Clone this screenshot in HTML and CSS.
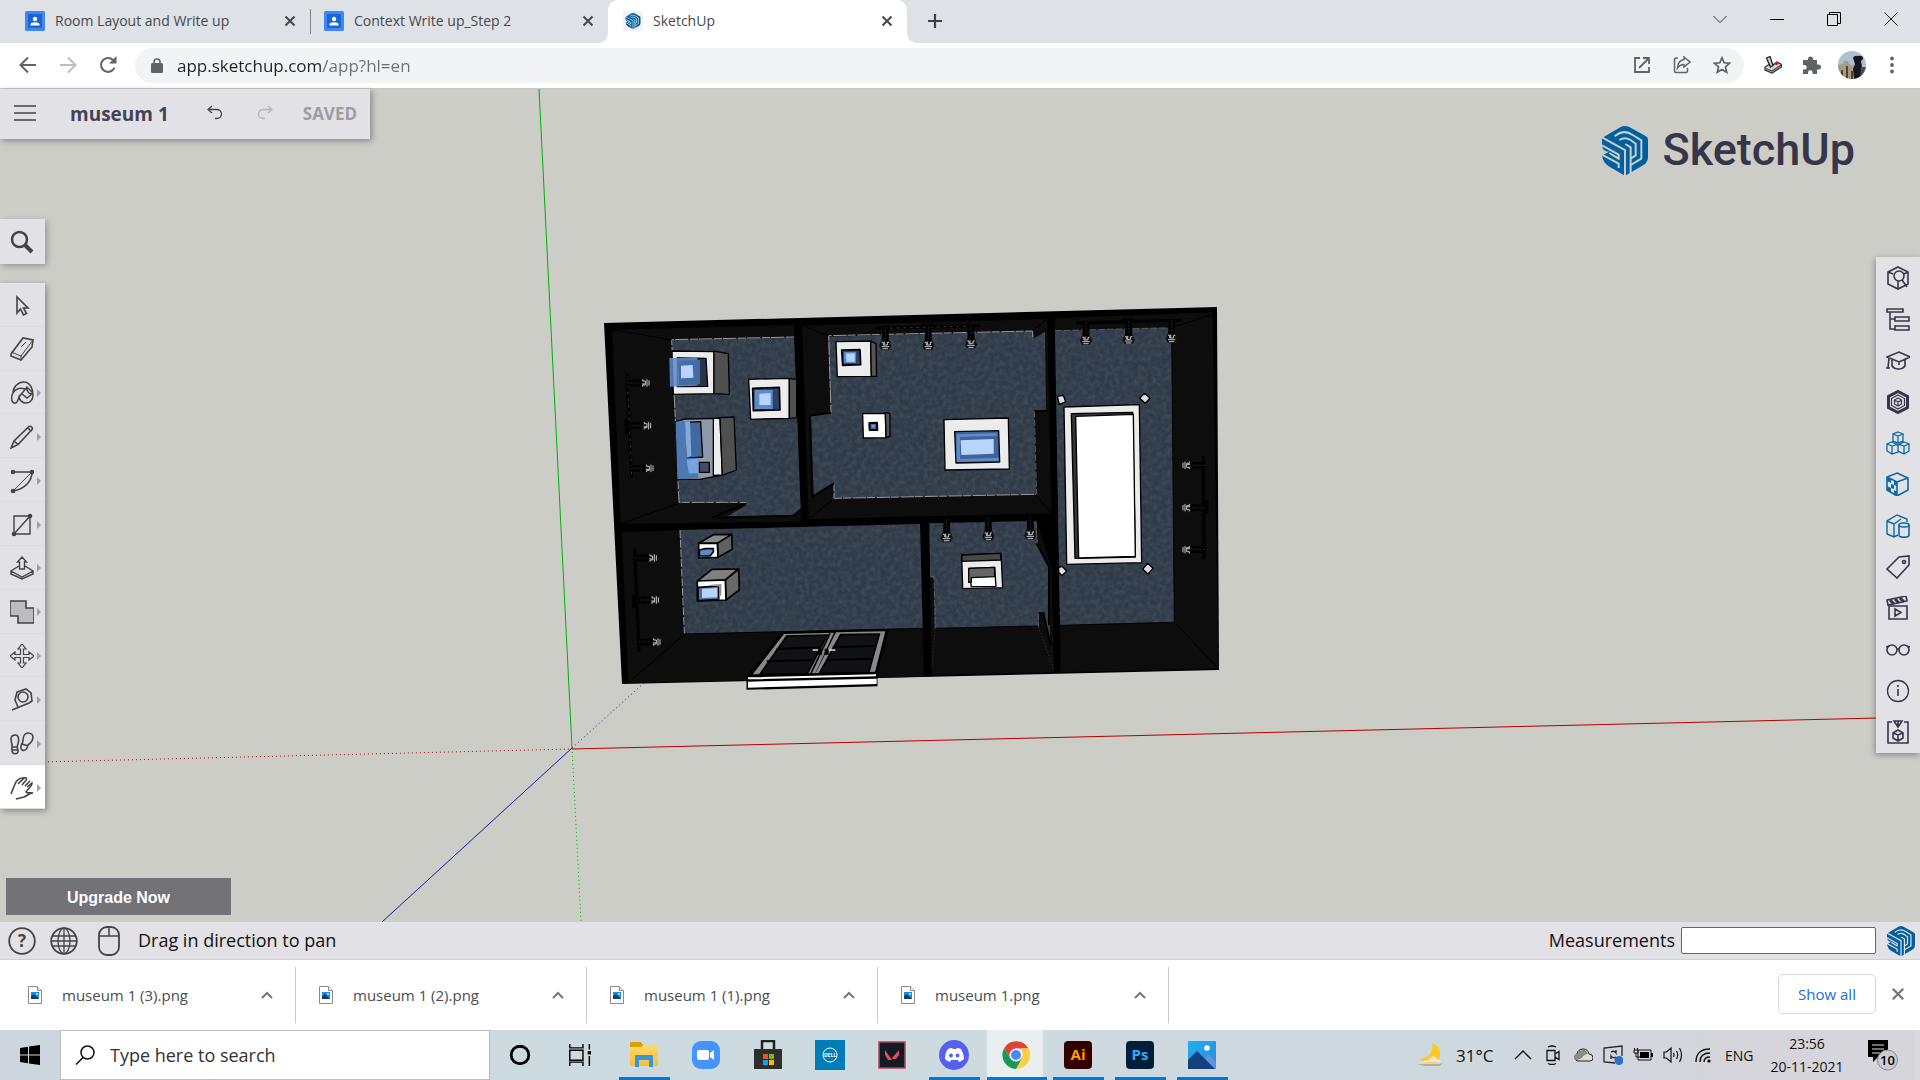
FILE: index.html
```html
<!DOCTYPE html>
<html lang="en">
<head>
<meta charset="utf-8">
<title>SketchUp</title>
<link rel="stylesheet" href="styles.css">
</head>
<body>
<svg class="defs" aria-hidden="true">
  <defs>
    <symbol id="close" viewBox="0 0 12 12"><path d="M1.5 1.5l9 9M10.500 1.500l-9 9" fill="none" stroke="currentColor" stroke-width="2"/></symbol>
    <symbol id="contact" viewBox="0 0 20 20"><rect width="20" height="20" rx="1.500" fill="#4285f4"/><rect x="3" y="3" width="14" height="14" fill="#1967d2"/><circle cx="10" cy="8" r="2.200" fill="#fff"/><path d="M5.500 14.500v-1c0-3 9-3 9 0v1z" fill="#fff"/></symbol>
    <symbol id="sketchup" viewBox="0 0 138 147">
      <path fill="#005f9e" d="M56 3Q68-3 82 3L132 31Q138 34 138 42V92Q138 108 126 116L73 147H65L20 121Q3 110 0 88L22 77 12 76Q0 70 0 58V36Z"/>
      <g fill="none" stroke="var(--gap)" stroke-width="6"><path d="M0 34L69 72V147"/><path d="M38 31Q66 8 92 27L118 43V98L86 117V148"/><path d="M52 42Q68 31 86 42L101 53V88L87 97"/><path d="M70 54L86 64V118"/><path d="M0 58L50 86V98L22 81"/><path d="M0 86L50 113V126"/></g>
    </symbol>
    <symbol id="file" viewBox="0 0 14 18"><path d="M.5.5h9l4 4v13H.5z" fill="#fff" stroke="#8a8a8a"/><path d="M9.500.5v4h4" fill="#eee" stroke="#8a8a8a"/><rect x="3" y="6" width="8" height="7" fill="#1593e0"/><path d="M3 13v-3l3-2 5 5z" fill="#173a78"/><circle cx="9" cy="8" r="1" fill="#bfe7ff"/></symbol>
    <symbol id="caret" viewBox="0 0 12 8"><path d="M1 7l5-5 5 5" fill="none" stroke="currentColor" stroke-width="2"/></symbol>
    <symbol id="spot" viewBox="-18 -50 36 84" overflow="visible"><path d="M-9-40h18l2 45h-22z" fill="#000"/><path d="M0-38V2" stroke="#444" stroke-width="2" stroke-dasharray="5 5"/><path d="M-13 3h26l5 16-6 11h-24l-6-11z" fill="#111"/><path d="M-11 8h5v8h12V8h5M-11 21h22M-3 6v9M-8 27h16" fill="none" stroke="#c4c4c4" stroke-width="3"/></symbol>
    <filter id="carpet" x="0" y="0" width="1" height="1" color-interpolation-filters="sRGB"><feTurbulence type="fractalNoise" baseFrequency=".07" numOctaves="3" result="n"/><feColorMatrix in="n" values="0 0 0 0 .29  0 0 0 0 .34  0 0 0 0 .38  1.200 0 0 0 -.4" result="t"/><feComposite in="t" in2="SourceGraphic" operator="in" result="m"/><feMerge><feMergeNode in="SourceGraphic"/><feMergeNode in="m"/></feMerge></filter>
    <linearGradient id="folder" x2="0" y2="1"><stop stop-color="#ffd96b"/><stop offset="1" stop-color="#f7be38"/></linearGradient>
    <linearGradient id="photo" x2="1" y2="1"><stop stop-color="#1fb1ee"/><stop offset="1" stop-color="#2f86dd"/></linearGradient>
  </defs>
</svg>

<header class="browser">
  <div class="tabstrip">
    <div class="tab"><svg class="fav"><use href="#contact"/></svg><span>Room Layout and Write up</span><button class="tab-close" aria-label="Close tab"><svg><use href="#close"/></svg></button></div>
    <div class="tab divided"><svg class="fav"><use href="#contact"/></svg><span>Context Write up_Step 2</span><button class="tab-close" aria-label="Close tab"><svg><use href="#close"/></svg></button></div>
    <div class="tab active"><svg class="fav small"><use href="#sketchup"/></svg><span>SketchUp</span><button class="tab-close" aria-label="Close tab"><svg><use href="#close"/></svg></button></div>
    <button class="new-tab" aria-label="New tab"><svg viewBox="0 0 16 16"><path d="M8 1v14M1 8h14" stroke="#3c4043" stroke-width="2.200"/></svg></button>
    <div class="window-buttons">
      <button aria-label="Search tabs"><svg viewBox="0 0 14 14"><path d="M.5 4L7 10.500 13.500 4" fill="none" stroke="#333"/></svg></button>
      <button aria-label="Minimize"><svg viewBox="0 0 14 14"><path d="M0 7.500h14" stroke="#000"/></svg></button>
      <button aria-label="Restore"><svg viewBox="0 0 14 14"><path d="M.5 2.500h10v11H.5zM2.500 2.500v-2h11v11h-3" fill="none" stroke="#000"/></svg></button>
      <button aria-label="Close"><svg viewBox="0 0 14 14"><path d="M.5.5l13 13M13.500.5l-13 13" stroke="#222"/></svg></button>
    </div>
  </div>
  <div class="navbar">
    <button aria-label="Back"><svg viewBox="0 0 18 18"><path d="M17 9H2M9 1.500L1.500 9 9 16.500" fill="none" stroke="#5f6368" stroke-width="2"/></svg></button>
    <button aria-label="Forward"><svg viewBox="0 0 18 18"><path d="M1 9h15M9 1.500L16.500 9 9 16.500" fill="none" stroke="#bcbec1" stroke-width="2"/></svg></button>
    <button aria-label="Reload"><svg viewBox="0 0 18 18"><path d="M15.500 11.500A7 7 0 1 1 14 4l2 2" fill="none" stroke="#5f6368" stroke-width="2"/><path d="M17.500 0v7.500H10z" fill="#5f6368"/></svg></button>
    <div class="omnibox">
      <svg class="lock" viewBox="0 0 12 15"><rect y="5" width="12" height="10" rx="1.500" fill="#5f6368"/><path d="M3 6V4a3 3 0 0 1 6 0v2" fill="none" stroke="#5f6368" stroke-width="1.600"/></svg>
      <input class="url" type="text" aria-label="Address" value="app.sketchup.com/app?hl=en">
      <button aria-label="Open in new window"><svg viewBox="0 0 18 18"><path d="M7 2H2v14h14v-5M10 2h6v6M16 2L6 12" fill="none" stroke="#5f6368" stroke-width="1.800"/></svg></button>
      <button aria-label="Share"><svg viewBox="0 0 18 18"><path d="M5 2H3Q1.500 2 1.500 4v11q0 1.500 1.500 1.500h10q1.500 0 1.500-1.500v-3" fill="none" stroke="#5f6368" stroke-width="1.500"/><path d="M11 1l6 5-6 5V8.500Q7 8.500 4.500 12 5 4.500 11 3.500z" fill="none" stroke="#5f6368" stroke-width="1.500"/></svg></button>
      <button aria-label="Bookmark"><svg viewBox="0 0 18 18"><path d="M9 1.800l2.200 5 5.300.5-4 3.600 1.200 5.300L9 13.400l-4.700 2.800 1.200-5.300-4-3.600 5.300-.5z" fill="none" stroke="#5f6368" stroke-width="1.700"/></svg></button>
    </div>
    <button class="ext" aria-label="Joystick extension"><svg viewBox="0 0 18 18"><path d="M1 11l5-3 3 1 4-3 4.500 2.500v2.500L8 17l-7-3z" fill="#d8d8d4" stroke="#333" stroke-width="1.300"/><path d="M1.500 12.500l6.500 2.500 9-6" fill="none" stroke="#444" stroke-width="1.300"/><path d="M2.500 2l3.500-1.500 3 9-2.500 1.500z" fill="#ccc" stroke="#222" stroke-width="1.300"/><circle cx="12.500" cy="7.500" r="1.600" fill="#d11"/></svg></button>
    <button class="ext" aria-label="Extensions"><svg viewBox="0 0 18 18"><path d="M0 4h5V3a2.500 2.500 0 0 1 5 0v1h4v4.500h1.500a2.500 2.500 0 0 1 0 5H14V18h-4.500v-1.500a2.200 2.200 0 0 0-4.500 0V18H0v-4.500h1.500a2.200 2.200 0 0 0 0-4.500H0z" fill="#5f6368"/></svg></button>
    <button class="avatar" aria-label="Profile"><svg viewBox="0 0 28 28"><clipPath id="round"><circle cx="14" cy="14" r="14"/></clipPath><g clip-path="url(#round)"><path fill="#aebed3" d="M0 0h28v28H0z"/><path d="M0 14l5-1 1-3h4l1 3 5 2v13H0z" fill="#a59d80"/><path d="M3 28v-9h2v9M8 28V15h2v13M13 28v-8h2v8" fill="#4a4637"/><path d="M15 7q1-3 5-2 5-1 5 3l-2 2 1 6-1 12h-7l-1-10 2-5z" fill="#17171c"/><path d="M23 16h5v12h-6z" fill="#4b4f44"/></g></svg></button>
    <button class="dots" aria-label="Menu"><svg viewBox="0 0 4 18"><g fill="#5f6368"><circle cx="2" cy="2.500" r="1.900"/><circle cx="2" cy="9" r="1.900"/><circle cx="2" cy="15.500" r="1.900"/></g></svg></button>
  </div>
</header>

<main class="stage">
  <svg class="model" viewBox="0 89 1920 833" preserveAspectRatio="xMidYMid slice" role="img" aria-label="Museum floor model">
    <g fill="none" stroke-width="1">
      <path d="M539 89L572 748" stroke="#00ad0c"/><path d="M572 748L581 922" stroke="#00ad0c" stroke-dasharray="1 3"/>
      <path d="M572 749L1920 717" stroke="#b60000"/><path d="M0 763L572 749" stroke="#b60000" stroke-dasharray="1 3"/>
      <path d="M572 748L382 922" stroke="#1818b8"/><path d="M572 748L645 682" stroke="#1818b8" stroke-dasharray="1 3"/>
    </g>
    <path d="M604 323L1217 307L1219 670L622 684Z" fill="#000"/>
    <!-- upper left and centre galleries -->
    <g transform="translate(590 295) scale(.33333)">
      <path d="M66 104L612 90L633 680L92 686ZM636 92L1372 72L1384 655L656 672Z" fill="#0d0d0d"/>
      <g fill="#303a49" filter="url(#carpet)"><path d="M245 135L612 127L632 642L610 662L410 665L470 630V620L267 622Z"/><path d="M715 125L1328 108L1332 130L1365 110L1368 345L1332 348L1338 598L732 610V565L668 603L660 362L723 353Z"/></g>
      <g fill="none" stroke="#999" stroke-width="3" stroke-dasharray="24 5 40 3"><path d="M612 126L245 134L267 622H470V630"/><path d="M723 353L716 122L1328 108V130M732 565V610L1338 598"/></g>
      <g fill="none" stroke="#000" stroke-width="3"><path d="M66 104L245 135M92 686L267 625M636 92L715 122M656 672L732 612M1384 655L1338 600M1328 108L1372 72"/><path d="M365 668L470 625M380 668L610 662L634 643M1332 348H1372M660 362L668 605L732 565M658 362L723 353" stroke-width="6"/></g>
      <g fill="none" stroke="#000" stroke-width="9" stroke-linecap="round"><path d="M111 238L125 546M860 100L1168 92"/></g>
      <path d="M104 372h18v45h-18zM995 87h40v14h-40z"/>
      <g stroke="#555" stroke-width="2" stroke-dasharray="8 12"><path d="M112 250L125 540M880 100L1160 93"/></g>
      <g stroke="#000" stroke-width="4" stroke-linejoin="round">
        <path d="M246 168L372 170V296L250 298Z" fill="#ececec"/><path d="M372 168L415 176L418 298L372 296Z" fill="#505050"/>
        <path d="M262 188L348 190L353 274L262 275Z" fill="#28324a"/>
        <path d="M476 253L598 250V370L482 373Z" fill="#ececec"/><path d="M598 250L620 254V368L598 370Z" fill="#505050"/>
        <path d="M488 280L568 277L570 345L490 347Z" fill="#2d4268" stroke-width="5"/>
        <path d="M738 140L842 138L844 244L742 245Z" fill="#ececec"/><path d="M842 138L858 146L860 244H844Z" fill="#555"/>
        <path d="M755 165L810 164L812 209L758 211Z" fill="#2d4268" stroke-width="5"/>
        <path d="M818 356L886 355L888 428L820 429Z" fill="#fff"/><path d="M886 353L900 356V424L888 428Z" fill="#555"/><path d="M838 384L861 383L862 405H839Z" fill="#3d6597" stroke-width="6"/>
        <path d="M285 372L390 370L397 540L330 553L262 553L257 380Z" fill="#9099ac"/><path d="M370 370L390 369L397 540L370 541Z" fill="#ececec"/><path d="M390 368L432 366L439 525L397 541Z" fill="#505050"/>
        <path d="M288 382L332 380L338 486L290 490Z" fill="#42699f"/><path d="M328 502H358V532H328Z" fill="#454b5f"/>
      </g>
      <path d="M238 189L322 187V272L240 275Z" fill="#628cc8" opacity=".85"/><path d="M265 197L330 195V268L268 270Z" fill="#476ca4"/><path d="M273 212L308 210L310 248L273 250Z" fill="#b8d4fc"/>
      <path d="M494 285H548V342H494Z" fill="#5d8bca"/><path d="M508 296L542 295V330H508Z" fill="#b8d4fc"/>
      <path d="M762 171L798 170V204H762Z" fill="#5d8bca"/><path d="M768 176L794 175V200H770Z" fill="#b8d4fc"/>
      <path d="M257 380L285 378L290 490L325 488V548L262 553Z" fill="#4c78b4"/><path d="M285 380L300 379L304 482L290 488Z" fill="#86a9db"/><path d="M290 494L324 490L326 535H296Z" fill="#78a4dd"/><path d="M845 389h9v9h-9z" fill="#6e9cda"/>
      <g><use href="#spot" x="-18" y="-50" width="36" height="84" transform="translate(886 134)"/><use href="#spot" x="-18" y="-50" width="36" height="84" transform="translate(1015 134)"/><use href="#spot" x="-18" y="-50" width="36" height="84" transform="translate(1143 130)"/></g>
      <g><use href="#spot" x="-18" y="-50" width="36" height="84" transform="translate(150 264) rotate(-90)"/><use href="#spot" x="-18" y="-50" width="36" height="84" transform="translate(155 392) rotate(-90)"/><use href="#spot" x="-18" y="-50" width="36" height="84" transform="translate(162 520) rotate(-90)"/></g>
    </g>
    <!-- right gallery and lower centre room -->
    <g transform="translate(900 295) scale(.33333)">
      <path d="M465 70L938 52L955 1120L482 1132ZM88 685L410 676L455 820L462 1132L95 1140Z" fill="#0d0d0d"/>
      <g fill="#303a49" filter="url(#carpet)"><path d="M465 107L815 98L823 982L480 991Z"/><path d="M88 685L408 678L412 745L447 815L450 960V1040L430 955H415L417 993L104 1000L103 850L90 845Z"/></g>
      <g fill="none" stroke="#000" stroke-width="3"><path d="M938 58L815 98L823 982L955 1120M480 991L823 982M104 1000L415 993"/><path d="M410 745L447 815V990M415 955H430L452 1050" stroke-width="6"/></g>
      <g fill="none" stroke="#777" stroke-width="2" stroke-dasharray="20 6"><path d="M465 107L815 98M408 680L412 745M92 846H102L106 1000M415 955V995M403 348L410 598"/><path d="M106 1000L96 1115M415 995L462 1125" stroke="#444" stroke-dasharray="4 6"/></g>
      <g fill="none" stroke="#000" stroke-width="9" stroke-linecap="round"><path d="M532 84L842 76M910 486L912 790"/></g><path d="M905 615h20v40h-20zM665 70h40v12h-40z"/>
      <g stroke="#000" stroke-width="4" stroke-linejoin="round">
        <path d="M132 374L325 369L328 522L135 525Z" fill="#ececec"/><path d="M164 410L296 407L299 501L168 504Z" fill="#3f639a"/>
        <path d="M492 336L718 329L725 803L500 808Z" fill="#ececec"/><path d="M514 356L698 352L706 786L525 790Z" fill="#353535"/><path d="M527 364L700 358L706 784L536 789Z" fill="#fff"/>
        <path d="M185 780L303 775L308 878L188 881Z" fill="#ececec"/><path d="M185 780L302 775V795L187 799Z" fill="#484848"/><path d="M206 820L284 817L288 874L214 875Z" fill="#fff"/><path d="M206 820L284 817V845L214 848V862H206Z" fill="#666"/>
        <g fill="#ddd"><path d="M472 304L490 301L497 321L478 328Z"/><path d="M733 295L750 309L736 325L719 310Z"/><path d="M486 814L500 828L486 842L476 832V818Z"/><path d="M743 805L759 820L744 837L728 822Z"/></g>
      </g>
      <path d="M170 418L290 415V422L180 426V492L296 488V498L170 500Z" fill="#5d8bca"/><path d="M182 436L281 432V476L184 480Z" fill="#b8d4fc"/>
      <g><use href="#spot" x="-18" y="-50" width="36" height="84" transform="translate(558 119)"/><use href="#spot" x="-18" y="-50" width="36" height="84" transform="translate(686 117)"/><use href="#spot" x="-18" y="-50" width="36" height="84" transform="translate(815 113)"/><use href="#spot" x="-18" y="-50" width="36" height="84" transform="translate(140 710)"/><use href="#spot" x="-18" y="-50" width="36" height="84" transform="translate(265 706)"/><use href="#spot" x="-18" y="-50" width="36" height="84" transform="translate(391 703)"/></g>
      <g><use href="#spot" x="-18" y="-50" width="36" height="84" transform="translate(876 511) rotate(90)"/><use href="#spot" x="-18" y="-50" width="36" height="84" transform="translate(876 638) rotate(90)"/><use href="#spot" x="-18" y="-50" width="36" height="84" transform="translate(876 764) rotate(90)"/></g>
    </g>
    <!-- entrance hall -->
    <g transform="translate(590 500) scale(.33333)">
      <path d="M95 95L990 72L1002 530L115 548Z" fill="#0d0d0d"/>
      <path d="M270 90L990 72L998 385L285 402Z" fill="#303a49" filter="url(#carpet)"/>
      <path d="M270 90L283 400" stroke="#999" stroke-width="3" stroke-dasharray="24 5"/><path d="M115 548L285 402L998 385" fill="none" stroke="#000" stroke-width="3"/>
      <path d="M134 150L147 452" stroke="#000" stroke-width="9" stroke-linecap="round"/><path d="M126 285h18v38h-18z"/>
      <g><use href="#spot" x="-18" y="-50" width="36" height="84" transform="translate(172 174) rotate(-90)"/><use href="#spot" x="-18" y="-50" width="36" height="84" transform="translate(178 300) rotate(-90)"/><use href="#spot" x="-18" y="-50" width="36" height="84" transform="translate(183 426) rotate(-90)"/></g>
      <g stroke="#000" stroke-width="5" stroke-linejoin="round">
        <path d="M326 130L370 104L425 103L382 130Z" fill="#888"/><path d="M382 130L425 103L427 148L384 172Z" fill="#606060"/><path d="M326 130H382L384 172L326 174Z" fill="#fff"/><path d="M328 150L346 146H370V156L360 168H328Z" fill="#5d8bca"/>
        <path d="M322 243L366 208L446 207L406 240Z" fill="#808080"/><path d="M406 240L446 207L448 270L408 300Z" fill="#686868"/><path d="M322 243L406 240L408 300L322 303Z" fill="#fff"/><path d="M324 262L386 258V299L324 302Z" fill="#4c70a5"/>
      </g>
      <path d="M356 255L394 252V284L388 292V260Z" fill="#8a8a9c"/><path d="M336 266L382 264V292L336 294Z" fill="#b8d4fc"/>
      <path d="M472 528L575 396L898 387L860 523V555L472 567Z" fill="#000"/>
      <path d="M488 523L582 402L732 398L675 521ZM676 521L738 397L886 394L855 517Z" fill="#888"/>
      <path d="M510 523L590 408L712 405L652 521ZM688 520L752 404L868 402L836 518Z" fill="#111216" stroke="#000" stroke-width="5"/>
      <path d="M560 447L690 442M530 484L670 480M728 442L854 438M710 480L845 476" stroke="#000" stroke-width="6"/>
      <path d="M720 400L662 522" stroke="#000" stroke-width="5"/><path d="M668 450H688M714 450H736" stroke="#ddd" stroke-width="4"/><path d="M684 446h12v18h-12zM704 446h12v18h-12z"/>
      <path d="M472 527L860 518V556L472 567Z" stroke="#000" stroke-width="5"/>
      <path d="M474 532L858 523V529L474 538ZM474 545L860 536V552L474 563Z" fill="#fff"/>
    </g>
  </svg>

  <div class="left-side">
    <div class="doc-bar">
      <button class="menu" aria-label="Menu"><svg viewBox="0 0 22 16"><path d="M0 1h22M0 8h22M0 15h22" stroke="#444" stroke-width="1.400"/></svg></button>
      <h1>museum 1</h1>
      <button class="undo" aria-label="Undo"><svg viewBox="0 0 16 16"><path d="M5 1L1 4.500 5 8M1 4.500h8.500a5 4.500 0 0 1 0 9H8" fill="none" stroke="#444" stroke-width="1.300"/></svg></button>
      <button class="redo" aria-label="Redo"><svg viewBox="0 0 16 16"><path d="M11 1l4 3.500L11 8M15 4.500H6.500a5 4.500 0 0 0 0 9H8" fill="none" stroke="#b5b5ba" stroke-width="1.300"/></svg></button>
      <span class="saved">SAVED</span>
    </div>
    <button class="search-tool" aria-label="Search"><svg viewBox="0 0 24 24"><circle cx="9.500" cy="9.500" r="7.500" fill="none" stroke="#444" stroke-width="2.500"/><path d="M15 15l7 7" stroke="#444" stroke-width="4"/></svg></button>
    <nav class="tools" aria-label="Tools">
      <button aria-label="Select"><svg viewBox="0 0 24 24"><path d="M7 4v16l3.500-4 3 6 3-1.500-3-5.500H18z"/></svg></button>
      <button aria-label="Eraser"><svg viewBox="0 0 24 24"><path d="M1 17L13 1l10 2-1 7-11 13-10-4z"/><path d="M1 15l10 4L23 3M11 19v4M11 10l5-5" stroke-width="1"/></svg></button>
      <button class="more" aria-label="Paint"><svg viewBox="0 0 24 24"><path d="M3 12C3 6 8 1 14 1c6 0 9 7 9 13s-4 8-7 8-6-2-7-6c-1 3-2 7-5 6s-3-7-1-10c2-4 7-6 12-4M9 16l8-10 5 5M11 12l6 5 5-4M17 6c-1 3 2 8 5 6" stroke-width="1.500"/></svg></button>
      <button class="more" aria-label="Line"><svg viewBox="0 0 24 24"><path d="M1 23l3-7L19 1.500q3-1 3.500 2.500L8 19.500zM4 16l4 3.500M18 3l3.500 3.500"/></svg></button>
      <button class="more" aria-label="Arc"><svg viewBox="0 0 24 24"><path d="M3 3h19c0 8-6 17-19 19" /><path d="M3 22L22 3" stroke-width="1"/><g fill="#444"><circle cx="3" cy="3" r="1.500"/><circle cx="22" cy="3" r="1.500"/><circle cx="3" cy="22" r="1.500"/></g></svg></button>
      <button class="more" aria-label="Rectangle"><svg viewBox="0 0 24 24"><path d="M4 3h16v18H4zM4 21L20 3" stroke-width="1.400"/><g fill="#444"><circle cx="4" cy="21" r="1.500"/><circle cx="20" cy="3" r="1.500"/></g></svg></button>
      <button class="more" aria-label="Push pull"><svg viewBox="0 0 24 24"><path d="M9 10l-8 5 11 6 11-6-8-5M1 15v3l11 5 11-5v-3M9.500 13V6H7.500L12 1l4.500 5h-2v7z" stroke-width="1.400"/></svg></button>
      <button class="more" aria-label="Solid tools"><svg viewBox="0 0 24 24"><path d="M0 1h16v7h8v15H8v-7H0z" fill="#bcbbc2"/></svg></button>
      <button class="more" aria-label="Move"><svg viewBox="0 0 24 24"><path d="M12 0l4 5h-2.500v5.500H19V8l5 4-5 4v-2.500h-5.500V19H16l-4 5-4-5h2.500v-5.500H5V16l-5-4 5-4v2.500h5.500V5H8z" stroke-width="1.200"/></svg></button>
      <button class="more" aria-label="Tape measure"><svg viewBox="0 0 24 24"><path d="M2 22L19 15l3-2-1-8-5-4-9 3-2 8 3 7"/><circle cx="13" cy="9" r="5"/></svg></button>
      <button class="more" aria-label="Walk"><svg viewBox="0 0 24 24"><path d="M5 3C1 3 0 7 2 12v6c0 5 7 5 6 0l-1-3c2-5 3-12-2-12zM2 15h5M2 18h6M18 1c-4 0-5 5-5 8l-2 5c-1 5 4 6 6 2l1-3c6-4 7-12 0-12zM12 12l6 2"/></svg></button>
      <button class="more selected" aria-label="Pan"><svg viewBox="0 0 24 24"><path d="M1 18L5 8c2-5 6-7 12-6M8 8l6-6M12 9l5-6M15 10l5-5M17 11l5-4c1 2-4 6-6 9 1 2 5 0 7 1-4 0-6 3-9 4l-8 2"/></svg></button>
    </nav>
    <button class="upgrade">Upgrade Now</button>
  </div>

  <div class="right-side">
    <div class="brand"><svg><use href="#sketchup"/></svg><span>SketchUp</span></div>
    <nav class="panels" aria-label="Panels">
      <button aria-label="Entity info"><svg viewBox="0 0 24 24"><path d="M12 1l10 5v12l-10 5-10-5V6zM2 6l5 2M12 15v8M22 6l-4 2"/><circle cx="13" cy="10" r="5"/><path d="M16 14l5 7"/></svg></button>
      <button aria-label="Outliner"><svg viewBox="0 0 24 24"><path d="M1 2h16v3H1zM4 5v17h5M4 12h5M9 10h14v4H9zM9 19h14v4H9z"/></svg></button>
      <button aria-label="Instructor"><svg viewBox="0 0 24 24"><path d="M1 9l12-5 11 5-11 5zM6 12v6c3 4 10 4 13 0v-6M3 10L2 20H0h4M13 14v3"/></svg></button>
      <button aria-label="Components"><svg viewBox="0 0 24 24"><path d="M12 1.500l9.500 5v11l-9.500 5-9.500-5v-11z" stroke-width="3"/><path d="M12 5l6.500 3.500v7L12 19l-6.500-3.500v-7z" stroke-width="1.200"/><path d="M12 8l3.500 2v4L12 16l-3.500-2v-4zM8.500 10l3.500 2 3.500-2M12 12v4" stroke-width="1.200"/></svg></button>
      <button class="blue" aria-label="3D Warehouse"><svg viewBox="0 0 24 24"><path d="M12 1l5 2v7l-5 2-5-2V3zM7 3l5 2 5-2M12 5v7M6 11l6 3v7l-6 2-5-3v-7zM1 13l5 2 6-2M6 15v8M18 11l5 2v7l-5 3-6-3v-6zM12 13l6 2 5-2M18 15v8" stroke-width="1.300"/></svg></button>
      <button class="blue" aria-label="Materials"><svg viewBox="0 0 24 24"><path d="M11 1l11 5v12l-11 6L1 18V5zM1 5l10 5 11-4M11 10v14"/><path d="M1 5l4 2v5l3 1v5l3 2v4l-3-2v-5l-3-1v-5l-4-2M8 8l3 2v4l-3-1M1 14l4 2v4l-4-2" fill="#0b6aa5" stroke="none"/></svg></button>
      <button class="blue" aria-label="Styles"><svg viewBox="0 0 24 24"><path d="M12 21l-4 2-7-3V7l10-6 10 4v3M1 7l7 3v13M8 10l7-5" stroke-width="1.400"/><ellipse cx="18" cy="11" rx="5" ry="2"/><path d="M13 11v10c0 3 10 3 10 0V11"/></svg></button>
      <button aria-label="Tags"><svg viewBox="0 0 24 24"><path d="M1 14L13 2l10-1v9L11 23z"/><circle cx="18" cy="7" r="1.500"/></svg></button>
      <button aria-label="Scenes"><svg viewBox="0 0 24 24"><path d="M3 10h18v13H3zM9 13l6 3.500L9 20z"/><path d="M1 4l19-4 1 5L2 9z"/><path d="M4 4l4 4M9 3l4 4M14 2l4 4" stroke-width="3"/></svg></button>
      <button aria-label="Display"><svg viewBox="0 0 24 24"><circle cx="6" cy="12" r="5"/><circle cx="18" cy="12" r="5"/><path d="M0 9l3-1M21 8l3 1M11 11h2"/></svg></button>
      <button aria-label="Model info"><svg viewBox="0 0 24 24"><circle cx="12" cy="12" r="10.500" stroke-width="1.300"/><path d="M12 10v7M12 6v2"/></svg></button>
      <button aria-label="Export"><svg viewBox="0 0 24 24"><path d="M6 2H2v21h20V2h-4M12 10l5 3v5l-5 3-5-3v-5zM7 13l5 2 5-2M12 15v6M8 1h8l-4 6zM12 1v5"/></svg></button>
    </nav>
  </div>
</main>

<footer class="status">
  <button class="round" aria-label="Help"><svg viewBox="0 0 28 28"><circle cx="14" cy="14" r="12.800" fill="none" stroke="#444" stroke-width="1.800"/><text x="14" y="20" text-anchor="middle">?</text></svg></button>
  <button class="round" aria-label="Language"><svg viewBox="0 0 28 28"><g fill="none" stroke="#444" stroke-width="1.300"><circle cx="14" cy="14" r="12.800" stroke-width="1.800"/><ellipse cx="14" cy="14" rx="6" ry="12.800"/><path d="M14 1v26M3 9h22M1 14h26M3 19h22"/></g></svg></button>
  <button class="mouse" aria-label="Mouse"><svg viewBox="0 0 22 30"><rect x="1" y="1" width="20" height="28" rx="8" fill="none" stroke="#444" stroke-width="1.800"/><path d="M1 10h20M11 1v9" stroke="#444" stroke-width="1.500"/></svg></button>
  <p>Drag in direction to pan</p>
  <label for="measure">Measurements</label><input id="measure" type="text">
  <svg class="mark"><use href="#sketchup"/></svg>
</footer>

<section class="downloads" aria-label="Downloads">
  <div class="item"><svg class="doc"><use href="#file"/></svg><span>museum 1 (3).png</span><button aria-label="Options"><svg><use href="#caret"/></svg></button></div>
  <div class="item"><svg class="doc"><use href="#file"/></svg><span>museum 1 (2).png</span><button aria-label="Options"><svg><use href="#caret"/></svg></button></div>
  <div class="item"><svg class="doc"><use href="#file"/></svg><span>museum 1 (1).png</span><button aria-label="Options"><svg><use href="#caret"/></svg></button></div>
  <div class="item"><svg class="doc"><use href="#file"/></svg><span>museum 1.png</span><button aria-label="Options"><svg><use href="#caret"/></svg></button></div>
  <button class="show-all">Show all</button>
  <button class="dismiss" aria-label="Close downloads"><svg><use href="#close"/></svg></button>
</section>

<section class="taskbar" aria-label="Taskbar">
  <button class="start" aria-label="Start"><svg viewBox="0 0 20 20"><path d="M0 3l8-1.200v7.700H0zM9 1.600L20 0v9.500H9zM0 10.500h8v7.700L0 17zM9 10.500h11V20L9 18.400z"/></svg></button>
  <div class="finder"><svg viewBox="0 0 20 20"><circle cx="12.500" cy="7.500" r="6.500" fill="none" stroke="#111" stroke-width="1.500"/><path d="M8 12.500L1 19.500" stroke="#111" stroke-width="1.500"/></svg><input type="text" aria-label="Search" placeholder="Type here to search"></div>
  <div class="apps">
    <button class="sys" aria-label="Cortana"><svg viewBox="0 0 20 20"><circle cx="10" cy="10" r="8" fill="none" stroke="#000" stroke-width="2.600"/></svg></button>
    <button class="sys" aria-label="Task view"><svg viewBox="0 0 20 20"><path d="M.7 0v3.500h12V0M.7 5.700h12v9H.7zM.7 20v-3.500h12V20M18.500 0v5M18.500 11v9" fill="none" stroke="#000" stroke-width="1.300"/><path d="M17 6.500h3v3h-3z"/></svg></button>
    <button class="app open" aria-label="File Explorer"><svg viewBox="0 0 30 30"><path d="M1 3q0-1 1-1h10l2 3v3H1z" fill="#e0a000"/><path d="M1 7h11l3-2h14v21H1z" fill="url(#folder)"/><path d="M6 27V16q0-1 1-1h16q1 0 1 1v11h-4v-7H10v7z" fill="#3d94d8"/></svg></button>
    <button class="app" aria-label="Zoom"><svg viewBox="0 0 30 30"><rect x="1" y="1" width="28" height="28" rx="9" fill="#4593fc"/><rect x="6" y="10" width="12" height="10" rx="2" fill="#fff"/><path d="M19 13l4-3v10l-4-3z" fill="#fff"/></svg></button>
    <button class="app" aria-label="Store"><svg viewBox="0 0 30 30"><path d="M9 9V1h12v8" fill="none" stroke="#222" stroke-width="2.500"/><path d="M1 9h28v20H1z" fill="#2e2e2e"/><path d="M10 14h5v5h-5z" fill="#f25022"/><path d="M16 14h5v5h-5z" fill="#7fba00"/><path d="M10 20h5v5h-5z" fill="#00a4ef"/><path d="M16 20h5v5h-5z" fill="#ffb900"/></svg></button>
    <button class="app" aria-label="Dell"><svg viewBox="0 0 30 30"><path fill="#007db8" d="M0 0h30v30H0z"/><circle cx="15" cy="15" r="7" fill="none" stroke="#fff"/><text class="dell" x="15" y="17" text-anchor="middle">DELL</text></svg></button>
    <button class="app" aria-label="Valorant"><svg viewBox="0 0 30 30"><path fill="#111b26" stroke="#b64450" stroke-width="1.500" d="M2 2h26v26H2z"/><path d="M8 10l7 10h-4l-3-5zM22 10v5l-3 4h-3l-1-1z" fill="#f5475a"/></svg></button>
    <button class="app open" aria-label="Discord"><svg viewBox="0 0 30 30"><circle cx="15" cy="15" r="15" fill="#5560ee"/><path d="M9 9q2-1 4-1l1 1h3l1-1q2 0 4 1 3 5 3 10-2 2-5 3l-1-2h-7l-1 2q-3-1-5-3 0-6 3-10z" fill="#fff"/><g fill="#5560ee"><circle cx="12" cy="15.500" r="1.900"/><circle cx="18.500" cy="15.500" r="1.900"/></g></svg></button>
    <button class="app open current" aria-label="Chrome"><svg viewBox="0 0 30 30"><path d="M3 8.500A14 14 0 0 1 27.500 8.500H15L9 18z" fill="#dc4437"/><path d="M27.500 8.500A14 14 0 0 1 15 29L21 18 20 8.500z" fill="#fdcf40"/><path d="M3 8.500L9 18q4 5 12 0l-6 11A14 14 0 0 1 3 8.500z" fill="#159a58"/><circle cx="15" cy="15" r="6.500" fill="#fff"/><circle cx="15" cy="15" r="5" fill="#4a89f3"/></svg></button>
    <button class="app open" aria-label="Illustrator"><svg viewBox="0 0 30 30"><rect x="1" y="1" width="28" height="28" rx="4" fill="#330000"/><text x="15" y="20" text-anchor="middle" fill="#ff9a00">Ai</text></svg></button>
    <button class="app open" aria-label="Photoshop"><svg viewBox="0 0 30 30"><rect x="1" y="1" width="28" height="28" rx="4" fill="#001e36"/><text x="15" y="20" text-anchor="middle" fill="#31a8ff">Ps</text></svg></button>
    <button class="app open" aria-label="Photos"><svg viewBox="0 0 30 30"><rect x="1" y="1" width="28" height="28" rx="1" fill="url(#photo)"/><circle cx="20" cy="8" r="2.800" fill="#fff"/><path d="M18 18l4-4 7 8v7H18z" fill="#6392dc"/><path d="M1 20l9-9 18 18H1z" fill="#153f7d"/></svg></button>
  </div>
  <div class="tray">
    <svg class="moon" viewBox="0 0 28 26"><path d="M15 1q10 4 8 14-4 8-14 5l-7-2Q18 14 15 1z" fill="#fbc81c"/><path d="M4 20h20q0-3-4-3-2-4-6-2-2 4-4 3z" fill="#f0e3d0"/><path d="M0 22h22l4-1-3 3H7z" fill="#c8a88d"/></svg>
    <span class="temp">31°C</span>
    <button aria-label="Hidden icons"><svg viewBox="0 0 20 20"><path d="M2 14l8-8 8 8" fill="none" stroke="#111" stroke-width="1.400"/></svg></button>
    <button aria-label="Meet now"><svg viewBox="0 0 20 20"><path d="M4 5.500h8v10H4zM12 9l4-2.500v8L12 12M5 2q4-2 8 0M5 18.500q4 2 8 0" fill="none" stroke="#111" stroke-width="1.300"/></svg></button>
    <button aria-label="OneDrive"><svg viewBox="0 0 20 20"><path d="M4 16a4 4 0 0 1 0-7q1-5 6-5 5 0 6 5 4 0 4 4 0 3-3 3z" fill="#ddd" stroke="#222"/><path d="M4 15a3 3 0 0 1 0-6q1-4 6-4 4 0 5 4-4 0-6 4z" fill="#8a8a8a"/></svg></button>
    <button aria-label="Updates"><svg viewBox="0 0 20 20"><path d="M12 18L1 17V3l18-2v10M8 7q3-2 5 1V5M13 12q-3 2-5-1v3" fill="none" stroke="#222" stroke-width="1.300"/><circle cx="16" cy="15.500" r="4.500" fill="#2a72c4"/></svg></button>
    <button aria-label="Battery"><svg viewBox="0 0 20 20"><path d="M5 5h13v10H5z" fill="none" stroke="#111"/><path d="M7 7h9v6H7zM18 8h2v4h-2z"/><path d="M1 5h4v3H1zM1.500 3v2M4.500 3v2M3 8v4h4" fill="none" stroke="#111"/></svg></button>
    <button aria-label="Volume"><svg viewBox="0 0 20 20"><path d="M1 7h2.500L8 3v14l-4.500-4H1zM10.500 8q1 2 0 4M13.500 6q2.500 4 0 8M16.500 3q4 7 0 14" fill="none" stroke="#111" stroke-width="1.200"/></svg></button>
    <button aria-label="Network"><svg viewBox="0 0 20 20"><path d="M3 17Q3 4 17 4M7 17q0-9 10-9M11 17q0-5 6-5" fill="none" stroke="#111" stroke-width="1.400"/><circle cx="16" cy="16" r="1.600"/></svg></button>
    <span class="lang">ENG</span>
    <time datetime="2021-11-20T23:56"><span>23:56</span><span>20-11-2021</span></time>
    <button class="notices" aria-label="Notifications"><svg viewBox="0 0 32 32"><path d="M1 1h20v17H11l-5 5v-5H1z"/><path d="M5 6h12M5 10h12M5 14h8" stroke="#ddd"/><circle cx="20.500" cy="21" r="10" fill="#cdcdd1" stroke="#888"/><text x="20.500" y="26" text-anchor="middle">10</text></svg></button>
  </div>
</section>
</body>
</html>
```
FILE: styles.css
```css
* { box-sizing: border-box; }
html, body { height: 100%; }
body { margin: 0; display: flex; flex-direction: column; overflow: hidden; font-family: "Open Sans", "Noto Sans", sans-serif; font-size: 15px; color: #222; }
button { display: flex; align-items: center; justify-content: center; padding: 0; border: 0; background: none; font: inherit; color: inherit; }
input { font: inherit; min-width: 0; }
svg { display: block; flex: none; }
.defs { position: absolute; width: 0; height: 0; }

/* browser frame */
.tabstrip { display: flex; height: 43px; background: #dee1e6; color: #45494d; }
.tab { display: flex; align-items: center; width: 299px; padding: 0 14px 2px 15px; height: 43px; position: relative; }
.tab:first-child { width: 310px; padding-left: 25px; }
.divided { width: 298px; padding-left: 14px; }
.divided::before { content: ""; position: absolute; left: 0; top: 9px; width: 1px; height: 25px; background: #80868b; }
.tab span { flex: 1; margin-left: 10px; white-space: nowrap; font-size: 14px; line-height: 20px; }
.active { background: #fff; border-radius: 10px 10px 0 0; }
.active::before, .active::after { content: ""; position: absolute; bottom: 0; width: 10px; height: 10px; }
.active::before { left: -10px; background: radial-gradient(circle at 0 0, transparent 10px, #fff 10px); }
.active::after { right: -10px; background: radial-gradient(circle at 100% 0, transparent 10px, #fff 10px); }
.fav { width: 20px; height: 20px; }
.small { padding: 2px; --gap: #f3f4f9; background: #f3f4f9; }
.tab-close svg { width: 12px; height: 12px; }
.new-tab { width: 56px; padding-bottom: 1px; }
.new-tab svg { width: 16px; height: 16px; }
.window-buttons { display: flex; margin-left: auto; padding: 0 1px 6px 0; }
.window-buttons button { width: 57px; }
.window-buttons svg { width: 14px; height: 14px; }
.navbar { display: flex; align-items: center; height: 46px; padding: 0 18px 1px 12px; background: #fff; border-bottom: 1px solid #c9c9c9; }
.navbar > button { width: 32px; margin-right: 8px; }
.navbar svg { width: 18px; height: 18px; }
.omnibox { flex: 1; display: flex; align-items: center; height: 35px; margin: 0 20px 0 3px; padding: 0 13px 0 16px; border-radius: 18px; background: #f1f3f4; }
.omnibox .lock { width: 12px; height: 15px; }
.url { flex: 1; margin-left: 14px; padding: 0; border: 0; outline: 0; font-size: 17px; color: transparent; background: linear-gradient(90deg, #202124 146px, #6b6f74 146px); background-clip: text; }
.omnibox button { margin-left: 22px; }
.navbar > .ext { width: 18px; margin-right: 21px; }
.navbar > .avatar { width: 28px; margin-right: 23px; margin-left: -4px; }
.avatar svg { width: 28px; height: 28px; }
.navbar > .dots { width: 6px; margin: 0 7px 0 0; }

/* modelling area */
.stage { flex: 1; position: relative; display: flex; justify-content: space-between; min-height: 0; background: #cccdc7; }
.model { position: absolute; inset: 0; width: 100%; height: 100%; }
.left-side, .right-side { position: relative; display: flex; flex-direction: column; }
.doc-bar { display: flex; align-items: center; width: 370px; height: 50px; padding: 0 12px 2px 14px; background: #e2e1e6; box-shadow: 2px 2px 6px #0005; }
.doc-bar .menu svg { width: 22px; height: 16px; }
.doc-bar h1 { margin: 2px 38px 0 34px; font-size: 19px; line-height: 24px; color: #444154; white-space: nowrap; }
.doc-bar .undo, .doc-bar .redo { margin-right: 34px; }
.doc-bar .redo { margin-right: 30px; }
.undo svg, .redo svg { width: 16px; height: 16px; }
.saved { margin-top: 2px; font-size: 17px; font-weight: 700; line-height: 24px; color: #9d9ca3; }
.search-tool { width: 45px; height: 45px; margin-top: 80px; padding-right: 2px; background: #e2e1e6; box-shadow: 2px 2px 6px #0004; }
.search-tool svg { width: 24px; height: 24px; }
.tools { display: flex; flex-direction: column; width: 45px; height: 526px; margin-top: 19px; background: #e2e1e6; box-shadow: 2px 2px 6px #0005; }
.tools button { flex: 1; position: relative; padding: 2px 2px 0 0; border-bottom: 1px solid #dcdbe0; }
.tools svg, .panels svg { width: 24px; height: 24px; fill: none; stroke: #444; stroke-width: 1.6; }
.more::after { content: ""; position: absolute; right: 4px; border: 4px solid transparent; border-left-color: #a0a0a4; border-right: 0; }
.tools .selected { background: #fff; }
.upgrade { width: 225px; height: 37px; margin: auto 0 7px 6px; padding-top: 2px; background: #727277; color: #fff; font-family: "Liberation Sans", sans-serif; font-weight: 700; font-size: 16px; }
.right-side { align-items: flex-end; }
.brand { display: flex; align-items: center; height: 60px; margin: 31px 65px 0 0; color: #373549; font-family: Roboto, sans-serif; font-size: 45px; font-weight: 500; line-height: 60px; --gap: #cccdc7; }
.brand svg { width: 46px; height: 49px; margin-right: 14px; }
.panels { display: flex; flex-direction: column; width: 44px; height: 496px; margin-top: 77px; background: #e2e1e6; box-shadow: -1px 2px 6px #0005; }
.panels button { flex: 1; }
.panels svg { stroke: #373549; }
.panels .blue svg { stroke: #0b6aa5; }

.status { display: flex; align-items: center; height: 38px; padding: 0 5px 0 8px; background: #e2e1e6; border-bottom: 1px solid #cfcfd4; font-size: 18px; color: #111; --gap: #e2e1e6; }
.round { margin-right: 14px; }
.round svg { width: 28px; height: 28px; }
.round text { font: 700 17px "Open Sans", sans-serif; fill: #444; }
.mouse svg { width: 22px; height: 30px; }
.mouse { margin: 0 18px 0 6px; }
.status p { margin: 0 auto 0 0; }
.status p, .status label { padding-bottom: 2px; }
.status input { width: 195px; height: 27px; margin: 0 11px 0 6px; border: 1px solid #666; border-radius: 2px; background: #fff; }
.mark { width: 28px; height: 30px; }

.downloads { display: flex; align-items: center; height: 70px; padding-right: 15px; background: #fff; color: #4a4d51; }
.item { display: flex; align-items: center; width: 291px; height: 56px; padding: 0 22px 0 23px; border-right: 1px solid #c8c8c8; }
.item:first-child { width: 296px; padding-left: 28px; }
.item .doc { width: 14px; height: 18px; margin-right: 20px; }
.item span { flex: 1; }
.item button svg { width: 12px; height: 8px; color: #777; }
.show-all { width: 98px; height: 40px; margin: 0 15px 2px auto; border: 1px solid #d6d8dc; border-radius: 5px; color: #1a6be8; }
.dismiss svg { width: 14px; height: 14px; margin-bottom: 2px; color: #777; }

/* taskbar */
.taskbar { display: flex; height: 50px; background: linear-gradient(90deg, #cdd6de, #ccdbe1 30%, #ced9df 75%, #d5d5db 90%); }
.start { width: 60px; }
.start svg { width: 20px; height: 20px; }
.finder { display: flex; align-items: center; width: 430px; border: 1px solid #b9bdc0; background: #fff; padding-left: 14px; }
.finder svg { width: 20px; height: 20px; margin-right: 15px; }
.finder input { flex: 1; border: 0; outline: 0; padding: 0; font-size: 18px; }
.finder input::placeholder { color: #333; opacity: 1; }
.apps { display: flex; flex: none; }
.sys { width: 60px; }
.sys svg { width: 22px; height: 22px; }
.app { position: relative; width: 62px; }
.app svg { width: 30px; height: 30px; }
.sys + .app { margin-left: 3px; }
.app text { font: 700 15px "Open Sans", sans-serif; }
.app .dell { font-size: 5px; fill: #fff; }
.open::after { content: ""; position: absolute; left: 6px; right: 5px; bottom: 0; height: 3px; background: #0078d7; }
.current { background: linear-gradient(#e9eef1, #e9eef1) 2px 0 / 56px 100% no-repeat; }
.current::after { left: 2px; right: 0; }
.tray { display: flex; align-items: center; margin-left: auto; padding-right: 16px; border-right: 5px solid #dadadf; color: #111; }
.moon { width: 28px; height: 26px; margin-right: 11px; }
.temp { width: 52px; font-size: 17px; }
.tray button { width: 30px; }
.tray button svg { width: 20px; height: 20px; }
.lang { width: 42px; margin-left: 7px; font-size: 14px; }
.tray time { display: flex; flex-direction: column; align-items: center; width: 80px; font-size: 14px; line-height: 23px; }
.tray .notices { width: 32px; margin-left: 20px; }
.tray .notices svg { width: 32px; height: 32px; }
.notices text { font: 600 13px "Open Sans", sans-serif; }
```
